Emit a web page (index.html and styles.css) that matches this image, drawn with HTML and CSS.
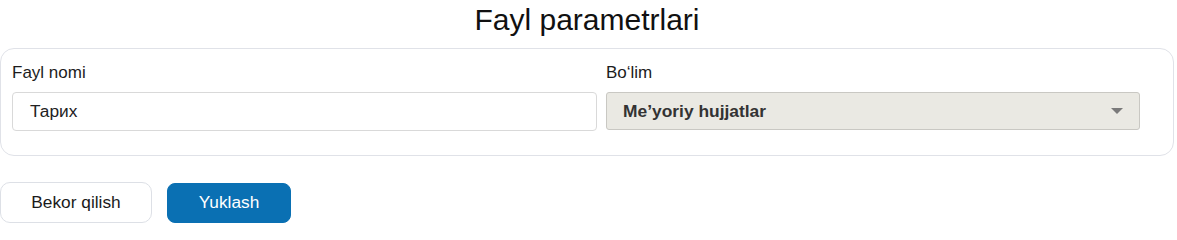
FILE: index.html
```html
<!DOCTYPE html>
<html lang="uz">
<head>
<meta charset="utf-8">
<title>Fayl parametrlari</title>
<link rel="stylesheet" href="styles.css">
</head>
<body>
<div class="page">
  <h1 class="title">Fayl parametrlari</h1>
  <div class="card">
    <div class="field field-name">
      <label class="label">Fayl nomi</label>
      <div class="input">Тарих</div>
    </div>
    <div class="field field-section">
      <label class="label">Bo‘lim</label>
      <div class="select">
        <span class="select-value">Me’yoriy hujjatlar</span>
        <span class="caret"></span>
      </div>
    </div>
  </div>
  <div class="actions">
    <button class="btn btn-cancel">Bekor qilish</button>
    <button class="btn btn-primary">Yuklash</button>
  </div>
</div>
</body>
</html>
```
FILE: styles.css
```css
* { box-sizing: border-box; }
html, body { margin: 0; padding: 0; background: #fff; }
body {
  font-family: "Liberation Sans", Arial, sans-serif;
  color: #1a1a1a;
}
.page { width: 1174px; }
.title {
  margin: 0;
  height: 40px;
  line-height: 40px;
  font-size: 30px;
  font-weight: normal;
  text-align: center;
  color: #111;
}
.card {
  margin-top: 8px;
  height: 108px;
  border: 1px solid #e0e2e8;
  border-radius: 14px;
  padding: 14px 11px 0 11px;
  display: grid;
  grid-template-columns: 585px 534px;
  column-gap: 9px;
}
.field { display: flex; flex-direction: column; }
.label {
  font-size: 17px;
  line-height: 20px;
  color: #1c1c1c;
  margin-bottom: 9px;
}
.input {
  height: 39px;
  border: 1px solid #d9d9d9;
  border-radius: 4px;
  padding: 0 17px;
  display: flex;
  align-items: center;
  font-size: 17.3px;
  color: #222;
}
.select {
  height: 38px;
  border: 1px solid #c9c8c3;
  border-radius: 3px;
  background: #eae9e3;
  padding: 0 16px;
  display: flex;
  align-items: center;
  justify-content: space-between;
}
.select-value {
  font-size: 17.4px;
  font-weight: bold;
  color: #333;
}
.caret {
  width: 0;
  height: 0;
  border-left: 6px solid transparent;
  border-right: 6px solid transparent;
  border-top: 6px solid #7a7a7a;
}
.actions {
  margin-top: 26px;
  display: flex;
  gap: 15px;
  align-items: center;
}
.btn {
  height: 41px;
  border-radius: 10px;
  font-family: "Liberation Sans", Arial, sans-serif;
  font-size: 17.3px;
  cursor: pointer;
}
.btn-cancel {
  width: 152px;
  background: #fff;
  border: 1px solid #dde0e6;
  color: #1a1a1a;
}
.btn-primary {
  width: 124px;
  height: 40px;
  background: #0a70b3;
  border: 1px solid #0a70b3;
  color: #fff;
  border-radius: 8px;
}
```
